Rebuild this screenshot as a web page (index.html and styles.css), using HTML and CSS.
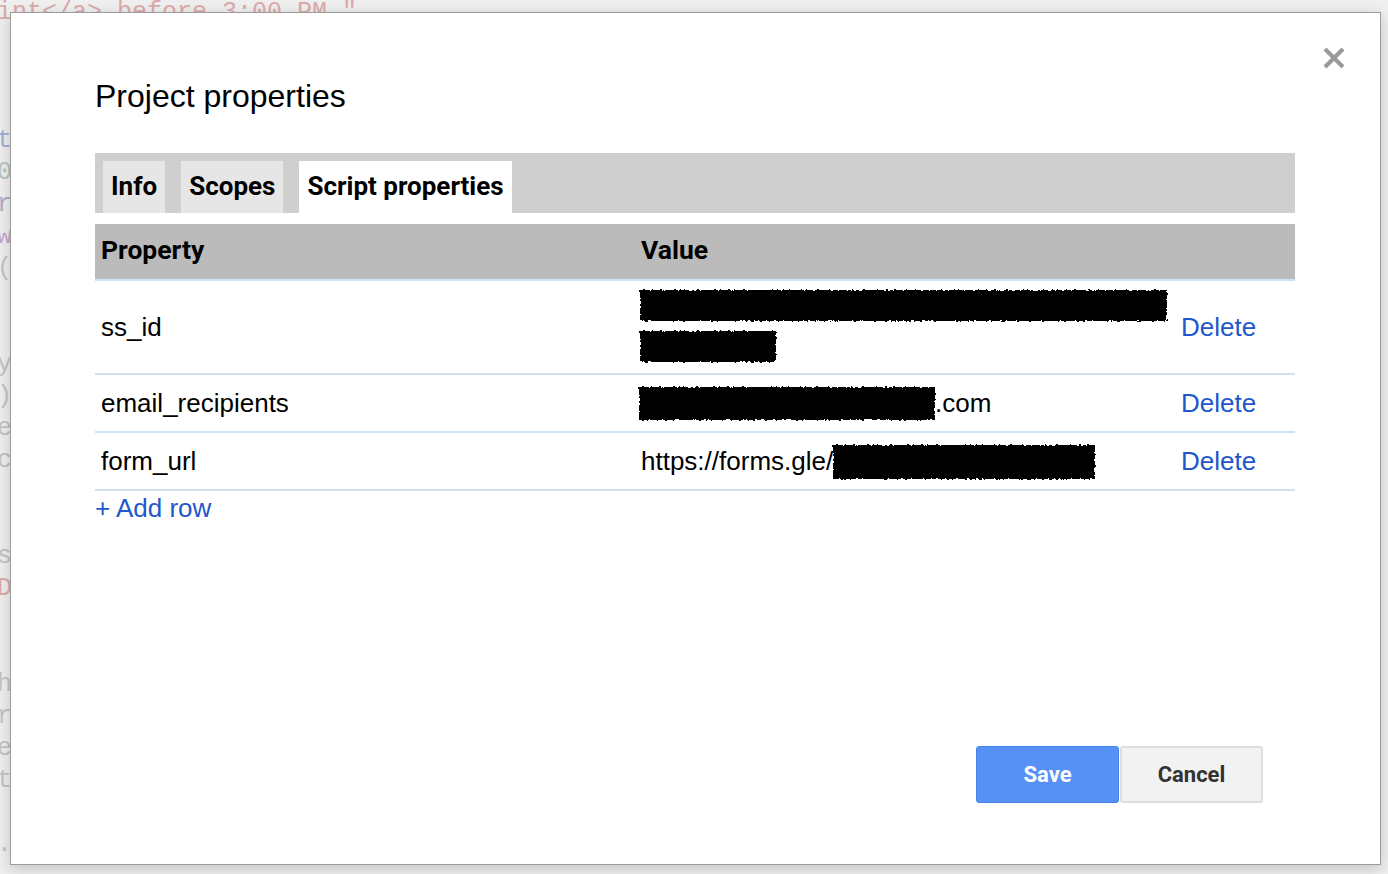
FILE: index.html
```html
<!DOCTYPE html>
<html lang="en">
<head>
<meta charset="utf-8">
<title>Project properties</title>
<link rel="stylesheet" href="styles.css">
</head>
<body>
<svg class="defs" width="0" height="0" aria-hidden="true">
  <filter id="rough" x="-5%" y="-20%" width="110%" height="140%">
    <feTurbulence type="fractalNoise" baseFrequency="0.35" numOctaves="2" seed="4" result="n"/>
    <feDisplacementMap in="SourceGraphic" in2="n" scale="4" xChannelSelector="R" yChannelSelector="G"/>
  </filter>
</svg>
<pre class="backdrop"><span class="c-red">int&lt;/a&gt; before 3:00 PM "</span>



<span class="c-blue">t</span>
<span class="c-green">0</span>
<span class="c-purple">r</span>
<span class="c-pink">w</span>
<span class="c-gray">(</span>


<span class="c-gray">y</span>
<span class="c-gray">)</span>
<span class="c-gray">e</span>
<span class="c-gray">c</span>


<span class="c-gray">s</span>
<span class="c-red">D</span>


<span class="c-gray">h</span>
<span class="c-gray">r</span>
<span class="c-gray">e</span>
<span class="c-gray">t</span>

<span class="c-gray">.</span></pre>

<div class="dialog" role="dialog">
  <button class="close" aria-label="Close">
    <svg width="24" height="24" viewBox="0 0 24 24"><path d="M3 3L21 21M21 3L3 21" stroke="#9a9a9a" stroke-width="4.2" fill="none"/></svg>
  </button>
  <h1 class="title">Project properties</h1>

  <div class="tabbar">
    <div class="tab">Info</div>
    <div class="tab">Scopes</div>
    <div class="tab active">Script properties</div>
  </div>

  <div class="table">
    <div class="row head">
      <div class="cell">Property</div>
      <div class="cell">Value</div>
      <div class="cell"></div>
    </div>
    <div class="row">
      <div class="cell">ss_id</div>
      <div class="cell stack">
        <span class="redact r1a"></span>
        <span class="redact r1b"></span>
      </div>
      <div class="cell del"><a href="#">Delete</a></div>
    </div>
    <div class="row">
      <div class="cell">email_recipients</div>
      <div class="cell inline"><span class="redact r2"></span>.com</div>
      <div class="cell del"><a href="#">Delete</a></div>
    </div>
    <div class="row">
      <div class="cell">form_url</div>
      <div class="cell inline">https://forms.gle/<span class="peek">c</span><span class="redact r3"></span></div>
      <div class="cell del"><a href="#">Delete</a></div>
    </div>
  </div>
  <a class="addrow" href="#">+ Add row</a>

  <div class="footer">
    <button class="btn save">Save</button>
    <button class="btn cancel">Cancel</button>
  </div>
</div>
</body>
</html>
```

FILE: styles.css
```css
html, body {
  margin: 0;
  padding: 0;
}
body {
  width: 1388px;
  height: 874px;
  overflow: hidden;
  background: #efefef;
  font-family: "Liberation Sans", Arial, sans-serif;
  position: relative;
}
.defs {
  position: absolute;
  width: 0;
  height: 0;
}
.backdrop {
  position: absolute;
  left: -3px;
  top: -3px;
  margin: 0;
  font-family: "Liberation Mono", monospace;
  font-size: 25px;
  line-height: 32px;
  color: #c8c8c8;
}
.c-red { color: #dcaaaa; }
.c-blue { color: #a3add8; }
.c-green { color: #b4c6b8; }
.c-purple { color: #b2aac6; }
.c-pink { color: #c8a8cc; }
.c-gray { color: #c4c4c4; }

.dialog {
  position: absolute;
  left: 10px;
  top: 12px;
  width: 1371px;
  height: 853px;
  box-sizing: border-box;
  background: #fff;
  border: 1px solid #9c9c9c;
  box-shadow: 0 4px 14px rgba(0, 0, 0, 0.18);
  padding: 63px 85px 0 84px;
  display: flex;
  flex-direction: column;
}
.close {
  position: absolute;
  top: 33px;
  right: 34px;
  width: 24px;
  height: 24px;
  padding: 0;
  border: 0;
  background: none;
  display: flex;
}
.title {
  margin: 0;
  font-weight: normal;
  font-size: 32px;
  line-height: 40px;
  color: #000;
}
.tabbar {
  margin-top: 37px;
  height: 60px;
  box-sizing: border-box;
  background: #cfcfcf;
  padding: 8px 8px 0;
  display: flex;
  gap: 16px;
}
.tab {
  background: #e6e6e6;
  padding: 0 8px;
  height: 52px;
  line-height: 50px;
  font-family: Roboto, "Liberation Sans", sans-serif;
  font-weight: bold;
  font-size: 26px;
  color: #000;
}
.tab.active {
  background: #fff;
}
.table {
  margin-top: 11px;
}
.row {
  display: grid;
  grid-template-columns: 540px 535px 125px;
  align-items: center;
  min-height: 56px;
  border-bottom: 2px solid #d3e2f3;
  font-size: 26px;
  color: #000;
}
.row.head {
  background: #bbbbbb;
  height: 55px;
  min-height: 0;
  align-items: start;
  font-family: Roboto, "Liberation Sans", sans-serif;
  font-weight: bold;
  font-size: 26.5px;
  line-height: 52px;
}
.cell {
  padding-left: 6px;
}
.stack {
  display: flex;
  flex-direction: column;
  align-items: flex-start;
  gap: 10px;
  padding: 9px 0 11px 5px;
}
.inline {
  display: flex;
  align-items: center;
  white-space: nowrap;
}
.redact {
  display: inline-block;
  background: #000;
  filter: url(#rough);
}
.r1a { width: 527px; height: 31px; }
.r1b { width: 136px; height: 31px; }
.r2 { width: 296px; height: 33px; margin-left: -2px; }
.r3 { width: 262px; height: 34px; margin-left: -6px; margin-top: 2px; }
.peek {
  display: inline-block;
  width: 6px;
  overflow: hidden;
}
.del {
  padding-left: 11px;
}
a {
  color: #2057cb;
  text-decoration: none;
}
.addrow {
  margin-top: 2px;
  font-size: 26px;
  line-height: 30px;
  align-self: flex-start;
}
.footer {
  margin-top: auto;
  margin-bottom: 61px;
  padding-right: 32px;
  display: flex;
  justify-content: flex-end;
  gap: 1px;
}
.btn {
  width: 143px;
  height: 57px;
  border-radius: 3px;
  font-family: Roboto, "Liberation Sans", sans-serif;
  font-weight: bold;
  font-size: 22px;
  padding: 0;
  margin: 0;
}
.save {
  background: #5891f5;
  border: 1px solid #4581ea;
  color: #fff;
}
.cancel {
  background: #f2f2f2;
  border: 2px solid #dedede;
  color: #333;
}
```
